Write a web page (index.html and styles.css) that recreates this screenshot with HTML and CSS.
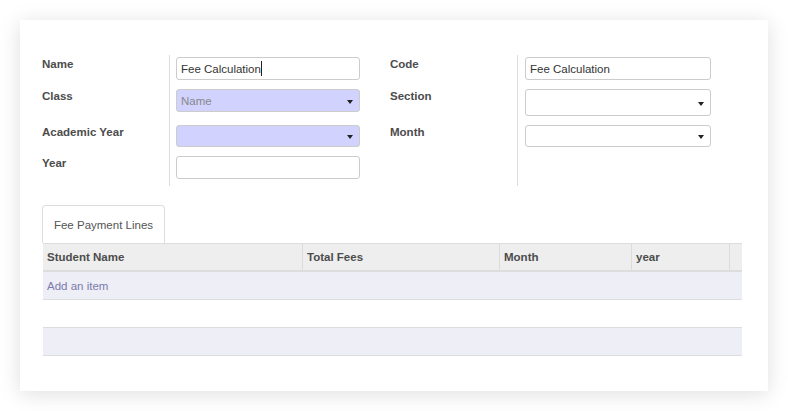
FILE: index.html
```html
<!DOCTYPE html>
<html>
<head>
<meta charset="utf-8">
<link rel="stylesheet" href="styles.css">
</head>
<body>
<div class="page">
  <div class="sheet">
    <div class="form-grid">
      <div class="lbl">Name</div>
      <div class="fld fld-left"><div class="inp"><span>Fee Calculation</span><span class="caret"></span></div></div>
      <div class="lbl">Code</div>
      <div class="fld fld-right"><div class="inp wide">Fee Calculation</div></div>

      <div class="lbl">Class</div>
      <div class="fld fld-left"><div class="inp sel req"><span class="ph">Name</span><span class="arrow"></span></div></div>
      <div class="lbl">Section</div>
      <div class="fld fld-right"><div class="inp sel wide tall"><span class="arrow"></span></div></div>

      <div class="lbl">Academic Year</div>
      <div class="fld fld-left"><div class="inp sel req short"><span class="arrow"></span></div></div>
      <div class="lbl">Month</div>
      <div class="fld fld-right"><div class="inp sel wide short"><span class="arrow"></span></div></div>

      <div class="lbl">Year</div>
      <div class="fld fld-left"><div class="inp"></div></div>
      <div class="lbl"></div>
      <div class="fld fld-right"></div>
    </div>

    <div class="tabs">
      <div class="tab">Fee Payment Lines</div>
    </div>
    <div class="table">
      <div class="row head">
        <div class="c c1">Student Name</div>
        <div class="c c2">Total Fees</div>
        <div class="c c3">Month</div>
        <div class="c c4">year</div>
        <div class="c c5"></div>
      </div>
      <div class="row body odd"><a class="add">Add an item</a></div>
      <div class="row body even"></div>
      <div class="row body odd last"></div>
    </div>
  </div>
</div>
</body>
</html>
```
FILE: styles.css
```css
html, body {
  margin: 0;
  padding: 0;
  background: #ffffff;
  font-family: "Liberation Sans", Arial, sans-serif;
  font-size: 11px;
  color: #4c4c4c;
}
.page {
  padding: 20px;
}
.sheet {
  width: 748px;
  box-sizing: border-box;
  height: 371px;
  background: #ffffff;
  box-shadow: 0 3px 20px rgba(0, 0, 0, 0.13);
  padding: 35px 26px 35px 22px;
}
.form-grid {
  display: grid;
  grid-template-columns: 127px 221px 127px 200px;
}
.lbl {
  font-weight: bold;
  color: #4c4c4c;
  padding-top: 2px;
  line-height: 14px;
  font-size: 11.5px;
}
.fld {
  border-left: 1px solid #dddddd;
  padding: 2px 0 7px 6px;
}
.fld-right {
  padding-left: 7px;
}
.inp {
  position: relative;
  width: 184px;
  height: 23px;
  box-sizing: border-box;
  border: 1px solid #cccccc;
  border-radius: 3px;
  background: #ffffff;
  padding: 0 4px;
  display: flex;
  align-items: center;
  font-size: 11.5px;
  color: #333333;
}
.inp.wide {
  width: 186px;
}
.inp.tall {
  height: 27px;
}
.inp.short {
  height: 22px;
}
.inp.req {
  background: #d2d2ff;
}
.ph {
  color: #888888;
}
.caret {
  display: inline-block;
  width: 1px;
  height: 15px;
  background: #222222;
}
.arrow {
  position: absolute;
  right: 6px;
  top: 50%;
  margin-top: -1px;
  width: 0;
  height: 0;
  border-left: 3px solid transparent;
  border-right: 3px solid transparent;
  border-top: 4px solid #222222;
}
.tabs {
  margin-top: 19px;
  display: flex;
}
.tab {
  width: 123px;
  height: 38px;
  box-sizing: border-box;
  border: 1px solid #dddddd;
  border-bottom: none;
  border-radius: 4px 4px 0 0;
  display: flex;
  align-items: center;
  justify-content: center;
  color: #555555;
  font-size: 11.5px;
  padding-top: 1px;
}
.table {
  width: 699px;
  margin-left: 1px;
}
.row {
  display: flex;
  box-sizing: border-box;
}
.head {
  height: 29px;
  background: #eeeeee;
  border-top: 1px solid #dddddd;
  border-bottom: 2px solid #dddddd;
}
.c {
  box-sizing: border-box;
  border-right: 1px solid #dcdcdc;
  font-weight: bold;
  font-size: 11.5px;
  color: #4c4c4c;
  padding: 0 4px;
  display: flex;
  align-items: center;
}
.c1 { width: 260px; }
.c2 { width: 197px; }
.c3 { width: 132px; }
.c4 { width: 98px; }
.c5 { flex: 1; border-right: none; }
.body {
  height: 28px;
  align-items: center;
}
.odd {
  background: #eeeef6;
  border-bottom: 1px solid #dddddd;
}
.even {
  background: #ffffff;
  border-bottom: 1px solid #dddddd;
}
.add {
  color: #7c7bad;
  padding-left: 4px;
  font-size: 11.5px;
  text-decoration: none;
}
```
